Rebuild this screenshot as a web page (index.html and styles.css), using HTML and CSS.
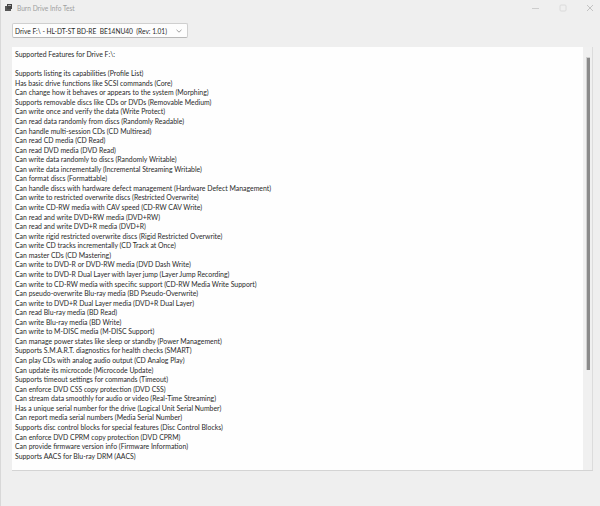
FILE: index.html
```html
<!DOCTYPE html>
<html>
<head>
<meta charset="utf-8">
<title>Burn Drive Info Test</title>
<link rel="stylesheet" href="styles.css">
</head>
<body>
<div class="window">
  <div class="titlebar">
    <svg class="app-icon" width="7" height="7" viewBox="0 0 7 7"><rect x="0" y="2" width="6" height="5" fill="#555"/><rect x="2" y="0" width="5" height="5" fill="#444"/><rect x="3" y="1" width="3" height="1" fill="#aaa"/></svg>
    <span class="title">Burn Drive Info Test</span>
    <div class="controls">
      <svg class="ctl" width="8" height="8" viewBox="0 0 8 8"><line x1="0" y1="4.5" x2="7" y2="4.5" stroke="#c4c4c4" stroke-width="0.8"/></svg>
      <svg class="ctl" width="8" height="8" viewBox="0 0 8 8"><rect x="1" y="1" width="6" height="6" rx="1" fill="none" stroke="#d6d6d6" stroke-width="0.8"/></svg>
      <svg class="ctl" width="8" height="8" viewBox="0 0 8 8"><path d="M1 1L7 7M7 1L1 7" stroke="#b8b8b8" stroke-width="0.8"/></svg>
    </div>
  </div>
  <div class="toolbar">
    <div class="combo">
      <span class="combo-text">Drive F:\ - HL-DT-ST BD-RE  BE14NU40  (Rev: 1.01)</span>
      <svg class="chevron" width="6" height="4" viewBox="0 0 6 4"><path d="M0.5 0.8L3 3.2L5.5 0.8" fill="none" stroke="#777" stroke-width="0.7"/></svg>
    </div>
  </div>
  <div class="panel">
    <div class="content">
      <div class="line">Supported Features for Drive F:\:</div>
      <div class="line">&nbsp;</div>
      <div class="line">Supports listing its capabilities (Profile List)</div>
      <div class="line">Has basic drive functions like SCSI commands (Core)</div>
      <div class="line">Can change how it behaves or appears to the system (Morphing)</div>
      <div class="line">Supports removable discs like CDs or DVDs (Removable Medium)</div>
      <div class="line">Can write once and verify the data (Write Protect)</div>
      <div class="line">Can read data randomly from discs (Randomly Readable)</div>
      <div class="line">Can handle multi-session CDs (CD Multiread)</div>
      <div class="line">Can read CD media (CD Read)</div>
      <div class="line">Can read DVD media (DVD Read)</div>
      <div class="line">Can write data randomly to discs (Randomly Writable)</div>
      <div class="line">Can write data incrementally (Incremental Streaming Writable)</div>
      <div class="line">Can format discs (Formattable)</div>
      <div class="line">Can handle discs with hardware defect management (Hardware Defect Management)</div>
      <div class="line">Can write to restricted overwrite discs (Restricted Overwrite)</div>
      <div class="line">Can write CD-RW media with CAV speed (CD-RW CAV Write)</div>
      <div class="line">Can read and write DVD+RW media (DVD+RW)</div>
      <div class="line">Can read and write DVD+R media (DVD+R)</div>
      <div class="line">Can write rigid restricted overwrite discs (Rigid Restricted Overwrite)</div>
      <div class="line">Can write CD tracks incrementally (CD Track at Once)</div>
      <div class="line">Can master CDs (CD Mastering)</div>
      <div class="line">Can write to DVD-R or DVD-RW media (DVD Dash Write)</div>
      <div class="line">Can write to DVD-R Dual Layer with layer jump (Layer Jump Recording)</div>
      <div class="line">Can write to CD-RW media with specific support (CD-RW Media Write Support)</div>
      <div class="line">Can pseudo-overwrite Blu-ray media (BD Pseudo-Overwrite)</div>
      <div class="line">Can write to DVD+R Dual Layer media (DVD+R Dual Layer)</div>
      <div class="line">Can read Blu-ray media (BD Read)</div>
      <div class="line">Can write Blu-ray media (BD Write)</div>
      <div class="line">Can write to M-DISC media (M-DISC Support)</div>
      <div class="line">Can manage power states like sleep or standby (Power Management)</div>
      <div class="line">Supports S.M.A.R.T. diagnostics for health checks (SMART)</div>
      <div class="line">Can play CDs with analog audio output (CD Analog Play)</div>
      <div class="line">Can update its microcode (Microcode Update)</div>
      <div class="line">Supports timeout settings for commands (Timeout)</div>
      <div class="line">Can enforce DVD CSS copy protection (DVD CSS)</div>
      <div class="line">Can stream data smoothly for audio or video (Real-Time Streaming)</div>
      <div class="line">Has a unique serial number for the drive (Logical Unit Serial Number)</div>
      <div class="line">Can report media serial numbers (Media Serial Number)</div>
      <div class="line">Supports disc control blocks for special features (Disc Control Blocks)</div>
      <div class="line">Can enforce DVD CPRM copy protection (DVD CPRM)</div>
      <div class="line">Can provide firmware version info (Firmware Information)</div>
      <div class="line">Supports AACS for Blu-ray DRM (AACS)</div>
    </div>
    <div class="scrollbar">
      <div class="thumb"></div>
    </div>
  </div>
</div>
</body>
</html>
```

FILE: styles.css
```css
html, body {
  margin: 0;
  padding: 0;
  background: #efefef;
}
body {
  width: 600px;
  height: 506px;
  overflow: hidden;
  font-family: Lato, "Liberation Sans", sans-serif;
  color: #2a2a2a;
}
.window {
  height: 506px;
  border-left: 1px solid #d8d8d8;
  box-sizing: border-box;
}
.titlebar {
  height: 15px;
  display: flex;
  align-items: center;
  padding-left: 4px;
}
.app-icon {
  margin-right: 5px;
}
.title {
  font-size: 6.6px;
  color: #a0a0a0;
}
.controls {
  margin-left: auto;
  display: flex;
  align-items: center;
  gap: 19px;
  padding-right: 6px;
}
.toolbar {
  padding: 8px 0 0 11px;
  height: 24px;
  box-sizing: border-box;
}
.combo {
  width: 176px;
  height: 15px;
  box-sizing: border-box;
  border: 1px solid #cfcfcf;
  border-bottom-color: #b8b8b8;
  border-radius: 2px;
  background: #fdfdfd;
  display: flex;
  align-items: center;
  padding: 0 5px 0 2px;
}
.combo-text {
  white-space: pre;
  font-size: 6.6px;
  color: #2a2a2a;
}
.chevron {
  margin-left: auto;
}
.panel {
  margin: 8px 0 0 11px;
  width: 581px;
  height: 424px;
  display: flex;
  border-bottom: 1px solid #d4d4d4;
  box-sizing: border-box;
}
.content {
  flex: 1;
  background: #fefefe;
  padding: 3px 3px 2px;
  font-size: 6.9px;
  line-height: 9.56px;
  overflow: hidden;
}
.line {
  white-space: nowrap;
}
.scrollbar {
  width: 10px;
  background: #f0f0f0;
  border-right: 1px solid #dcdcdc;
  box-sizing: border-box;
  padding: 10px 2px 0 3px;
}
.thumb {
  height: 312px;
  background: #8a8a8a;
  border: 1px solid #cfcfcf;
  border-width: 1px 0 0 1px;
}
```
